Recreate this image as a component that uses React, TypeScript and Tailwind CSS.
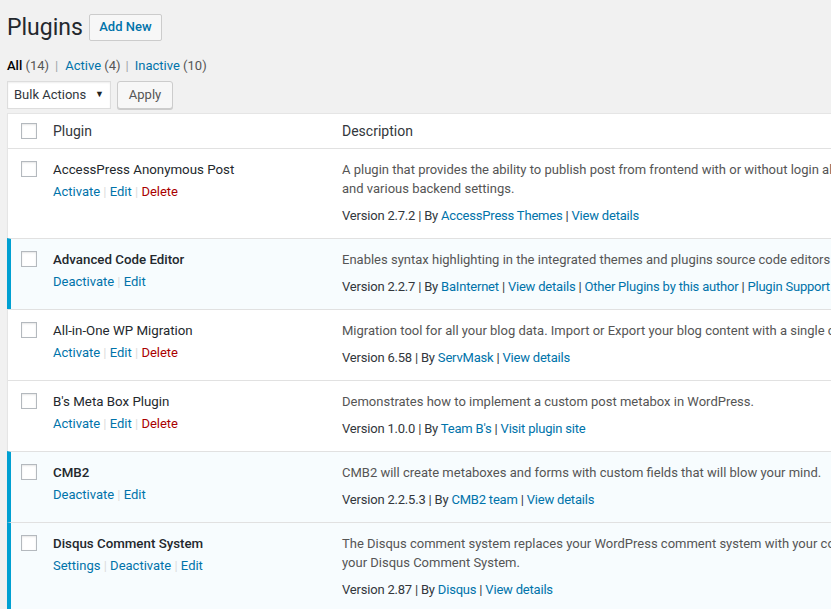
import React from "react";

type Link = { t: string; red?: boolean };
type Row = {
  name: string;
  active: boolean;
  actions: Link[];
  desc: string[];
  version: string;
  meta: string[];
};

const rows: Row[] = [
  {
    name: "AccessPress Anonymous Post",
    active: false,
    actions: [{ t: "Activate" }, { t: "Edit" }, { t: "Delete", red: true }],
    desc: [
      "A plugin that provides the ability to publish post from frontend with or without login along with captcha",
      "and various backend settings.",
    ],
    version: "Version 2.7.2",
    meta: ["AccessPress Themes", "View details"],
  },
  {
    name: "Advanced Code Editor",
    active: true,
    actions: [{ t: "Deactivate" }, { t: "Edit" }],
    desc: ["Enables syntax highlighting in the integrated themes and plugins source code editors with line numbers"],
    version: "Version 2.2.7",
    meta: ["BaInternet", "View details", "Other Plugins by this author", "Plugin Support"],
  },
  {
    name: "All-in-One WP Migration",
    active: false,
    actions: [{ t: "Activate" }, { t: "Edit" }, { t: "Delete", red: true }],
    desc: ["Migration tool for all your blog data. Import or Export your blog content with a single click."],
    version: "Version 6.58",
    meta: ["ServMask", "View details"],
  },
  {
    name: "B's Meta Box Plugin",
    active: false,
    actions: [{ t: "Activate" }, { t: "Edit" }, { t: "Delete", red: true }],
    desc: ["Demonstrates how to implement a custom post metabox in WordPress."],
    version: "Version 1.0.0",
    meta: ["Team B's", "Visit plugin site"],
  },
  {
    name: "CMB2",
    active: true,
    actions: [{ t: "Deactivate" }, { t: "Edit" }],
    desc: ["CMB2 will create metaboxes and forms with custom fields that will blow your mind."],
    version: "Version 2.2.5.3",
    meta: ["CMB2 team", "View details"],
  },
  {
    name: "Disqus Comment System",
    active: true,
    actions: [{ t: "Settings" }, { t: "Deactivate" }, { t: "Edit" }],
    desc: [
      "The Disqus comment system replaces your WordPress comment system with your comments hosted and powered by Disqus.",
      "your Disqus Comment System.",
    ],
    version: "Version 2.87",
    meta: ["Disqus", "View details"],
  },
];

function Checkbox() {
  return (
    <div className="w-4 h-4 border border-[#b4b9be] bg-white shadow-[inset_0_1px_2px_rgba(0,0,0,0.1)]" />
  );
}

export default function App() {
  return (
    <div
      className="w-[831px] h-[609px] overflow-hidden bg-[#f1f1f1] text-[13px] text-[#444]"
      style={{ fontFamily: 'Roboto, "Noto Sans", sans-serif' }}
    >
      <div className="pl-[7px] w-[1000px]">
        <div className="flex items-center pt-[13px] h-[41px]">
          <h1 className="text-[23px] leading-[29px] text-[#23282d] font-normal">Plugins</h1>
          <div className="ml-[6px] h-[27px] w-[73px] flex items-center justify-center border border-[#ccc] bg-[#f7f7f7] rounded-[2px] text-[13px] font-medium text-[#0073aa]">
            Add New
          </div>
        </div>
        <div className="mt-[15px] h-[19px] flex items-center text-[13px] leading-[19px] whitespace-pre">
          <span className="text-black font-medium">All</span>
          <span className="text-[#555]"> (14)</span>
          <span className="text-[#a0a5aa] ml-[6px] mr-[7px]">|</span>
          <span className="text-[#0073aa]">Active</span>
          <span className="text-[#555]"> (4)</span>
          <span className="text-[#a0a5aa] ml-[5px] mr-[6px]">|</span>
          <span className="text-[#0073aa]">Inactive</span>
          <span className="text-[#555]"> (10)</span>
        </div>
        <div className="mt-[6px] flex items-center gap-[6px] h-[28px]">
          <div className="w-[104px] h-[28px] bg-white border border-[#ddd] flex items-center justify-between pl-[6px] pr-[6px] text-[#32373c] shadow-[inset_0_1px_2px_rgba(0,0,0,0.07)]">
            <span>Bulk Actions</span>
            <span className="text-[9px] text-[#222]">▼</span>
          </div>
          <div className="w-[56px] h-[28px] bg-[#f7f7f7] border border-[#ccc] rounded-[3px] flex items-center justify-center text-[#555] shadow-[0_1px_0_#ccc]">
            Apply
          </div>
        </div>
        <div className="mt-[4px] bg-white border border-[#e5e5e5] shadow-[0_1px_1px_rgba(0,0,0,0.04)]">
          <div className="flex h-[35px] border-b border-[#e1e1e1] items-center">
            <div className="w-[45px] pl-[13px]">
              <Checkbox />
            </div>
            <div className="w-[289px] text-[14px] text-[#32373c]">Plugin</div>
            <div className="text-[14px] text-[#32373c]">Description</div>
          </div>
          {rows.map((r, i) => (
            <div
              key={i}
              className={`flex ${i > 0 ? "border-t border-[#e1e1e1]" : ""} ${
                r.active ? "bg-[#f7fcfe] border-l-4 border-l-[#00a0d2] -ml-px" : ""
              }`}
            >
              <div className={`${r.active ? "w-[42px] pl-[10px]" : "w-[45px] pl-[13px]"} pt-[12px] shrink-0`}>
                <Checkbox />
              </div>
              <div className="w-[289px] shrink-0 pt-[11px]">
                <div className={`text-[13.3px] leading-[19px] text-[#23282d] ${r.active ? "font-medium" : ""}`}>{r.name}</div>
                <div className="mt-[3px] leading-[19px] whitespace-pre">
                  {r.actions.map((a, j) => (
                    <span key={j}>
                      {j > 0 && <span className="text-[#ddd]"> | </span>}
                      <span className={a.red ? "text-[#a00]" : "text-[#0073aa]"}>{a.t}</span>
                    </span>
                  ))}
                </div>
              </div>
              <div className="pt-[11px] pb-[13px] leading-[19px]">
                {r.desc.map((d, j) => (
                  <div key={j} className="whitespace-nowrap text-[#555]">
                    {d}
                  </div>
                ))}
                <div className="mt-[8px] whitespace-pre text-[#32373c] tracking-[-0.2px]">
                  {r.version}
                  {r.meta.map((m, j) => (
                    <span key={j}>
                      <span> | </span>
                      {j === 0 && <span>By </span>}
                      <span className="text-[#0073aa]">{m}</span>
                    </span>
                  ))}
                </div>
              </div>
            </div>
          ))}
        </div>
      </div>
    </div>
  );
}
